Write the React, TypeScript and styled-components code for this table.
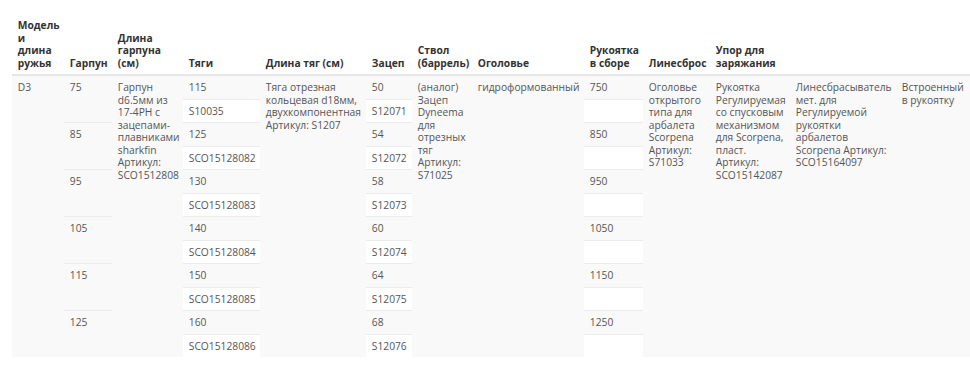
import React from "react";
import styled, { createGlobalStyle } from "styled-components";

const Global = createGlobalStyle`
  html, body { margin: 0; padding: 0; background: #ffffff; }
  body { font-family: "Open Sans", "Liberation Sans", sans-serif; }
`;

const Page = styled.div`
  width: 100vw;
  overflow: hidden;
  padding: 14px 0 0 12px;
  box-sizing: border-box;
`;

const Table = styled.table`
  border-collapse: collapse;
  table-layout: fixed;
  width: 964px;
  font-family: "Open Sans", "Liberation Sans", sans-serif;
  font-size: 10.25px;
  line-height: 12.5px;
  color: #555555;
`;

const Col = styled.col<{ $w: number }>`
  width: ${(p) => p.$w}px;
`;

const HeadCell = styled.th`
  text-align: left;
  vertical-align: bottom;
  font-weight: 700;
  color: #333333;
  padding: 5px 5.8px;
  border-bottom: 2px solid #e6e6e6;
`;

const Cell = styled.td<{ $shade: boolean }>`
  vertical-align: top;
  padding: 5px 5.8px;
  border-top: 1px solid #ececec;
  background: ${(p) => (p.$shade ? "#f9f9f9" : "#ffffff")};
  overflow-wrap: normal;
`;

const widths = [52, 48, 71, 77, 106, 46, 60, 112, 59, 67, 80, 106, 80];

const headers = [
  "Модель и длина ружья",
  "Гарпун",
  "Длина гарпуна (см)",
  "Тяги",
  "Длина тяг (см)",
  "Зацеп",
  "Ствол (баррель)",
  "Оголовье",
  "Рукоятка в сборе",
  "Линесброс",
  "Упор для заряжания",
  "",
  "",
];

const lengths = ["75", "85", "95", "105", "115", "125"];
const rods = [
  ["115", "S10035"],
  ["125", "SCO15128082"],
  ["130", "SCO15128083"],
  ["140", "SCO15128084"],
  ["150", "SCO15128085"],
  ["160", "SCO15128086"],
];
const hooks = [
  ["50", "S12071"],
  ["54", "S12072"],
  ["58", "S12073"],
  ["60", "S12074"],
  ["64", "S12075"],
  ["68", "S12076"],
];
const grips = ["750", "850", "950", "1050", "1150", "1250"];

export default function App() {
  const rows: React.ReactNode[] = [];
  for (let i = 0; i < 6; i++) {
    rows.push(
      <tr key={`a${i}`}>
        {i === 0 && (
          <Cell $shade rowSpan={12}>
            D3
          </Cell>
        )}
        <Cell $shade rowSpan={2}>
          {lengths[i]}
        </Cell>
        {i === 0 && (
          <Cell $shade rowSpan={12}>
            Гарпун d6.5мм из 17-4PH с зацепами-плавниками sharkfin Артикул: SCO1512808
          </Cell>
        )}
        <Cell $shade>{rods[i][0]}</Cell>
        {i === 0 && (
          <Cell $shade rowSpan={12}>
            Тяга отрезная кольцевая d18мм, двухкомпонентная Артикул: S1207
          </Cell>
        )}
        <Cell $shade>{hooks[i][0]}</Cell>
        {i === 0 && (
          <>
            <Cell $shade rowSpan={12}>
              (аналог) Зацеп Dyneema для отрезных тяг Артикул: S71025
            </Cell>
            <Cell $shade rowSpan={12}>
              гидроформованный
            </Cell>
          </>
        )}
        <Cell $shade>{grips[i]}</Cell>
        {i === 0 && (
          <>
            <Cell $shade rowSpan={12}>
              Оголовье открытого типа для арбалета Scorpena Артикул: S71033
            </Cell>
            <Cell $shade rowSpan={12}>
              Рукоятка Регулируемая со спусковым механизмом для Scorpena, пласт. Артикул: SCO15142087
            </Cell>
            <Cell $shade rowSpan={12}>
              Линесбрасыватель мет. для Регулируемой рукоятки арбалетов Scorpena Артикул: SCO15164097
            </Cell>
            <Cell $shade rowSpan={12}>
              Встроенный в рукоятку
            </Cell>
          </>
        )}
      </tr>
    );
    rows.push(
      <tr key={`b${i}`}>
        <Cell $shade={false}>{rods[i][1]}</Cell>
        <Cell $shade={false}>{hooks[i][1]}</Cell>
        <Cell $shade={false}></Cell>
      </tr>
    );
  }

  return (
    <>
      <Global />
      <Page>
        <Table>
          <colgroup>
            {widths.map((w, i) => (
              <Col key={i} $w={w} />
            ))}
          </colgroup>
          <thead>
            <tr>
              {headers.map((h, i) => (
                <HeadCell key={i}>{h}</HeadCell>
              ))}
            </tr>
          </thead>
          <tbody>{rows}</tbody>
        </Table>
      </Page>
    </>
  );
}
